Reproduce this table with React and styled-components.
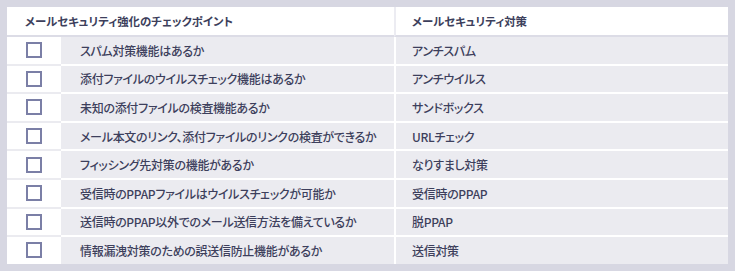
import React from "react";
import styled, { createGlobalStyle } from "styled-components";

const GlobalStyle = createGlobalStyle`
  html, body {
    margin: 0;
    padding: 0;
    background: #d7d7e2;
  }
  body {
    font-family: "Noto Sans CJK JP", "Noto Sans", sans-serif;
    font-feature-settings: "palt" 1;
    color: #3d3f5c;
  }
`;

const rows = [
  ["スパム対策機能はあるか", "アンチスパム"],
  ["添付ファイルのウイルスチェック機能はあるか", "アンチウイルス"],
  ["未知の添付ファイルの検査機能あるか", "サンドボックス"],
  ["メール本文のリンク、添付ファイルのリンクの検査ができるか", "URLチェック"],
  ["フィッシング先対策の機能があるか", "なりすまし対策"],
  ["受信時のPPAPファイルはウイルスチェックが可能か", "受信時のPPAP"],
  ["送信時のPPAP以外でのメール送信方法を備えているか", "脱PPAP"],
  ["情報漏洩対策のための誤送信防止機能があるか", "送信対策"],
];

function App() {
  return (
    <>
      <GlobalStyle />
      <Frame>
        <Table>
          <HeadCell $span>メールセキュリティ強化のチェックポイント</HeadCell>
          <HeadCell $right>メールセキュリティ対策</HeadCell>
          {rows.map(([point, measure], i) => (
            <React.Fragment key={i}>
              <CheckCell $last={i === rows.length - 1}>
                <Box />
              </CheckCell>
              <TextCell $last={i === rows.length - 1}>{point}</TextCell>
              <TextCell $last={i === rows.length - 1} $right>
                {measure}
              </TextCell>
            </React.Fragment>
          ))}
        </Table>
      </Frame>
    </>
  );
}

const Frame = styled.div`
  width: 735px;
  height: 271px;
  box-sizing: border-box;
  padding: 7px;
`;

const Table = styled.div`
  display: grid;
  grid-template-columns: 54px 333px 334px;
  width: 721px;
`;

const HeadCell = styled.div`
  grid-column: ${(p) => (p.$span ? "1 / 3" : "3")};
  background: #ffffff;
  height: 28px;
  display: flex;
  align-items: center;
  white-space: nowrap;
  padding-left: ${(p) => (p.$right ? "16px" : "18px")};
  font-size: 11.4px;
  font-weight: 700;
  border-bottom: 2px solid #dcdce6;
  border-left: ${(p) => (p.$right ? "2px solid #ececf2" : "none")};
`;

const CheckCell = styled.div`
  background: #ffffff;
  height: 26.6px;
  display: flex;
  align-items: center;
  justify-content: center;
  border-bottom: ${(p) => (p.$last ? "none" : "2px solid #ebebf0")};
`;

const Box = styled.span`
  width: 16px;
  height: 16px;
  box-sizing: border-box;
  border: 2px solid #7b7fa6;
  background: #ffffff;
`;

const TextCell = styled.div`
  background: #ebebf0;
  height: 26.6px;
  display: flex;
  align-items: center;
  white-space: nowrap;
  padding-left: ${(p) => (p.$right ? "16px" : "19px")};
  font-size: 12px;
  font-weight: 500;
  letter-spacing: -0.3px;
  border-bottom: ${(p) => (p.$last ? "none" : "2px solid #ffffff")};
  border-left: ${(p) => (p.$right ? "2px solid #ffffff" : "none")};
`;

export default App;
